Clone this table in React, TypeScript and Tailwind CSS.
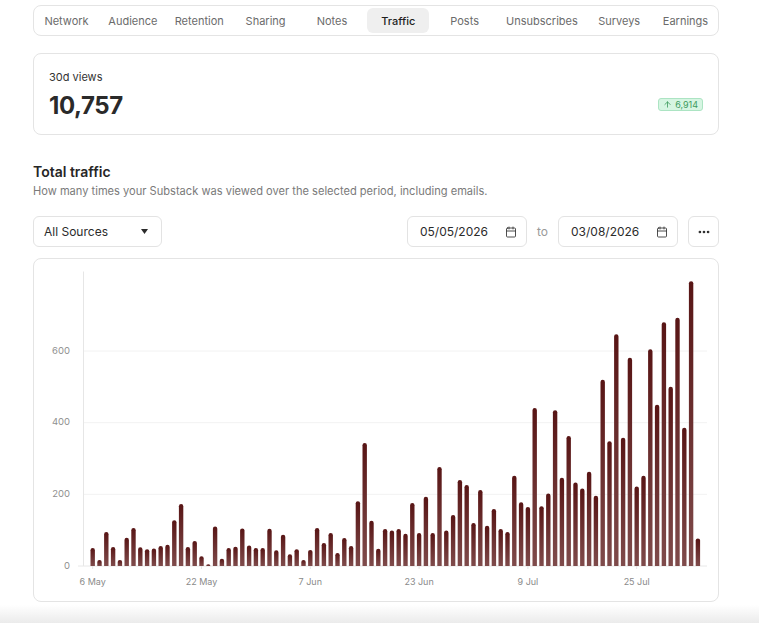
import React from 'react';
import { ArrowUp, Calendar, Ellipsis } from 'lucide-react';

const tabs = ['Network', 'Audience', 'Retention', 'Sharing', 'Notes', 'Traffic', 'Posts', 'Unsubscribes', 'Surveys', 'Earnings'];

// daily views, 6 May -> 3 Aug
const views = [
  50, 17, 95, 53, 17, 79, 106, 52, 47, 49, 56, 59, 128, 173, 53, 70, 27, 5, 110, 20,
  50, 54, 105, 57, 50, 50, 104, 44, 87, 33, 47, 17, 45, 106, 64, 92, 36, 78, 56, 181,
  343, 126, 48, 103, 99, 103, 90, 176, 92, 193, 92, 276, 99, 142, 240, 226, 120, 212, 112, 159,
  103, 95, 252, 178, 165, 441, 167, 202, 435, 246, 363, 233, 216, 263, 196, 520, 348, 647, 358, 581,
  222, 252, 605, 450, 680, 500, 693, 386, 795, 77,
];

const xLabels = [
  { i: 0, label: '6 May' },
  { i: 16, label: '22 May' },
  { i: 32, label: '7 Jun' },
  { i: 48, label: '23 Jun' },
  { i: 64, label: '9 Jul' },
  { i: 80, label: '25 Jul' },
];

const TrafficChart: React.FC = () => {
  const base = 307;
  const k = 0.3583;
  const step = 6.8;
  const w = 4.4;
  const r = w / 2;
  const x0 = 58.7;
  const y = (v: number) => base - v * k;

  return (
    <svg width="684" height="342" viewBox="0 0 684 342">
      <defs>
        <linearGradient id="barFill" x1="0" y1="0" x2="0" y2="1">
          <stop offset="0%" stopColor="#581515" />
          <stop offset="100%" stopColor="#7f4b4b" />
        </linearGradient>
      </defs>

      {[200, 400, 600].map((v) => (
        <line key={v} x1={49.5} x2={673} y1={y(v)} y2={y(v)} stroke="#f2f2f2" strokeWidth={1} />
      ))}
      <line x1={49.5} x2={49.5} y1={12.5} y2={base} stroke="#e6e6e6" strokeWidth={1} />
      <line x1={44} x2={673} y1={base} y2={base} stroke="#e8e8e8" strokeWidth={1} />

      {[0, 200, 400, 600].map((v) => (
        <text key={v} x={36} y={y(v)} textAnchor="end" dominantBaseline="middle" fontSize={9.5} fill="#8f8f8f">
          {v}
        </text>
      ))}

      {views.map((v, i) => {
        const cx = x0 + i * step;
        const top = y(v);
        const left = cx - r;
        const d = `M${left},${base} V${top + r} A${r},${r} 0 0 1 ${left + w},${top + r} V${base} Z`;
        return <path key={i} d={d} fill="url(#barFill)" />;
      })}

      {xLabels.map((l) => {
        const cx = x0 + l.i * step;
        return (
          <g key={l.label}>
            <line x1={cx} x2={cx} y1={base} y2={base + 3} stroke="#e6e6e6" />
            <text x={cx} y={324} textAnchor="middle" dominantBaseline="middle" fontSize={9} fill="#8a8a8a">
              {l.label}
            </text>
          </g>
        );
      })}
    </svg>
  );
};

const DateBox: React.FC<{ value: string }> = ({ value }) => (
  <div className="flex h-[31px] w-[120px] items-center justify-between rounded-md border border-[#e3e3e3] pl-[12px] pr-[9px] text-[12px] text-[#2b2b2b]">
    <span>{value}</span>
    <Calendar size={12} strokeWidth={1.8} className="text-[#3a3a3a]" />
  </div>
);

export default function App() {
  return (
    <div className="flex min-h-[623px] w-[759px] flex-col bg-white font-['Inter',sans-serif]">
      <div className="pl-[33px] pr-[40px] pt-[5px]">
        {/* tabs */}
        <div className="flex h-[31px] items-center justify-between rounded-lg border border-[#e4e4e4] px-[1.5px]">
          {tabs.map((t) => (
            <div
              key={t}
              className={`flex h-[25px] min-w-[62px] items-center justify-center rounded-md px-1.5 pt-[2px] text-[11px] ${
                t === 'Traffic' ? 'bg-[#efefef] font-medium text-[#1f1f1f]' : 'text-[#6b6b6b]'
              }`}
            >
              {t}
            </div>
          ))}
        </div>

        {/* 30d views */}
        <div className="mt-[17px] h-[82px] rounded-lg border border-[#e4e4e4] px-[15px] pt-[16px]">
          <div className="text-[11px] leading-[14px] text-[#333]">30d views</div>
          <div className="mt-[8px] flex items-center justify-between">
            <div className="text-[24px] font-bold leading-[28px] tracking-[-0.4px] text-[#2a2a2a]">10,757</div>
            <div className="mb-[3px] flex h-[13px] items-center gap-[3px] rounded-[3px] border border-[#ace4c3] bg-[#d6f5e2] px-[4px] text-[9px] text-[#3d9a5e]">
              <ArrowUp size={9} strokeWidth={2.2} />
              <span>6,914</span>
            </div>
          </div>
        </div>

        {/* heading */}
        <div className="mt-[27px] text-[14px] font-semibold leading-[20px] text-[#262626]">Total traffic</div>
        <div className="mt-[2px] text-[11.1px] leading-[14px] text-[#7a7a7a]">
          How many times your Substack was viewed over the selected period, including emails.
        </div>

        {/* controls */}
        <div className="mt-[18px] flex items-center">
          <div className="flex h-[31px] w-[129px] items-center justify-between rounded-md border border-[#e3e3e3] pl-[10px] pr-[13px] text-[12px] text-[#2b2b2b]">
            <span>All Sources</span>
            <svg width="7" height="5" viewBox="0 0 7 5">
              <path d="M0 0 H7 L3.5 5 Z" fill="#2b2b2b" />
            </svg>
          </div>
          <div className="ml-auto">
            <DateBox value="05/05/2026" />
          </div>
          <span className="mx-[10px] text-[12px] text-[#9a9a9a]">to</span>
          <DateBox value="03/08/2026" />
          <div className="ml-[10px] flex h-[31px] w-[31px] items-center justify-center rounded-md border border-[#e3e3e3] text-[#2b2b2b]">
            <Ellipsis size={14} strokeWidth={2.6} />
          </div>
        </div>

        {/* chart */}
        <div className="mt-[11px] h-[344px] rounded-lg border border-[#e4e4e4]">
          <TrafficChart />
        </div>
      </div>
      <div className="mt-auto h-[18px] bg-gradient-to-b from-white to-[#ebebeb]" />
    </div>
  );
}
